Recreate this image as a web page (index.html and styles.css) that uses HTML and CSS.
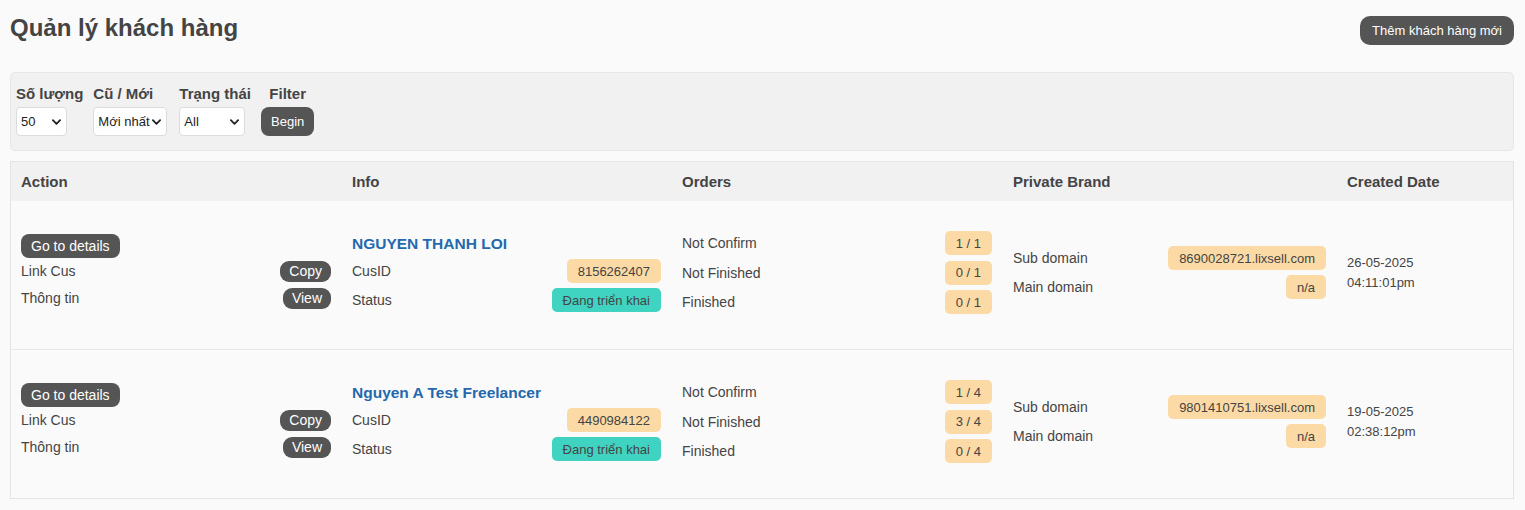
FILE: index.html
```html
<!DOCTYPE html>
<html lang="vi">
<head>
<meta charset="utf-8">
<title>Quản lý khách hàng</title>
<link rel="stylesheet" href="styles.css">
</head>
<body>
<div class="page">
  <header class="topbar">
    <h1 class="title">Quản lý khách hàng</h1>
    <button class="btn btn-add">Thêm khách hàng mới</button>
  </header>

  <section class="filters">
    <div class="fcol">
      <label class="flabel">Số lượng</label>
      <div class="sel sel-qty">
        <select><option>50</option></select>
        <svg class="chev" viewBox="0 0 10 6" width="9" height="6"><path d="M1 1l4 4 4-4" fill="none" stroke="#222" stroke-width="2" stroke-linecap="round" stroke-linejoin="round"/></svg>
      </div>
    </div>
    <div class="fcol">
      <label class="flabel">Cũ / Mới</label>
      <div class="sel sel-order">
        <select><option>Mới nhất</option></select>
        <svg class="chev" viewBox="0 0 10 6" width="9" height="6"><path d="M1 1l4 4 4-4" fill="none" stroke="#222" stroke-width="2" stroke-linecap="round" stroke-linejoin="round"/></svg>
      </div>
    </div>
    <div class="fcol fcol-status">
      <label class="flabel">Trạng thái</label>
      <div class="sel sel-status">
        <select><option>All</option></select>
        <svg class="chev" viewBox="0 0 10 6" width="9" height="6"><path d="M1 1l4 4 4-4" fill="none" stroke="#222" stroke-width="2" stroke-linecap="round" stroke-linejoin="round"/></svg>
      </div>
    </div>
    <div class="fcol fcol-center">
      <label class="flabel">Filter</label>
      <button class="btn btn-begin">Begin</button>
    </div>
  </section>

  <section class="tbl">
    <div class="trow thead">
      <div class="th">Action</div>
      <div class="th">Info</div>
      <div class="th">Orders</div>
      <div class="th">Private Brand</div>
      <div class="th">Created Date</div>
    </div>

    <div class="trow tbody">
      <div class="td">
        <button class="btn btn-go">Go to details</button>
        <div class="kv kv-act"><span>Link Cus</span><button class="btn btn-sm">Copy</button></div>
        <div class="kv kv-act"><span>Thông tin</span><button class="btn btn-sm">View</button></div>
      </div>
      <div class="td">
        <div class="name">NGUYEN THANH LOI</div>
        <div class="kv kv-info"><span>CusID</span><span class="badge">8156262407</span></div>
        <div class="kv kv-info"><span>Status</span><span class="badge badge-teal">Đang triển khai</span></div>
      </div>
      <div class="td">
        <div class="kv kv-ord"><span>Not Confirm</span><span class="badge">1 / 1</span></div>
        <div class="kv kv-ord"><span>Not Finished</span><span class="badge">0 / 1</span></div>
        <div class="kv kv-ord"><span>Finished</span><span class="badge">0 / 1</span></div>
      </div>
      <div class="td">
        <div class="kv kv-info"><span>Sub domain</span><span class="badge">8690028721.lixsell.com</span></div>
        <div class="kv kv-info"><span>Main domain</span><span class="badge">n/a</span></div>
      </div>
      <div class="td date">
        <div>26-05-2025</div>
        <div>04:11:01pm</div>
      </div>
    </div>

    <div class="trow tbody">
      <div class="td">
        <button class="btn btn-go">Go to details</button>
        <div class="kv kv-act"><span>Link Cus</span><button class="btn btn-sm">Copy</button></div>
        <div class="kv kv-act"><span>Thông tin</span><button class="btn btn-sm">View</button></div>
      </div>
      <div class="td">
        <div class="name">Nguyen A Test Freelancer</div>
        <div class="kv kv-info"><span>CusID</span><span class="badge">4490984122</span></div>
        <div class="kv kv-info"><span>Status</span><span class="badge badge-teal">Đang triển khai</span></div>
      </div>
      <div class="td">
        <div class="kv kv-ord"><span>Not Confirm</span><span class="badge">1 / 4</span></div>
        <div class="kv kv-ord"><span>Not Finished</span><span class="badge">3 / 4</span></div>
        <div class="kv kv-ord"><span>Finished</span><span class="badge">0 / 4</span></div>
      </div>
      <div class="td">
        <div class="kv kv-info"><span>Sub domain</span><span class="badge">9801410751.lixsell.com</span></div>
        <div class="kv kv-info"><span>Main domain</span><span class="badge">n/a</span></div>
      </div>
      <div class="td date">
        <div>19-05-2025</div>
        <div>02:38:12pm</div>
      </div>
    </div>
  </section>
</div>
</body>
</html>
```

FILE: styles.css
```css
* { box-sizing: border-box; }

html, body {
  margin: 0;
  padding: 0;
  background: #fafafa;
}

body {
  font-family: "Liberation Sans", Arial, Helvetica, sans-serif;
  font-size: 14px;
  color: #444;
}

.page {
  padding: 14px 11px 0 10px;
}

.topbar {
  display: flex;
  justify-content: space-between;
  align-items: flex-start;
}

.title {
  margin: 0;
  font-size: 24px;
  line-height: 28px;
  font-weight: bold;
  color: #444;
}

.btn {
  font-family: inherit;
  border: none;
  background: #555;
  color: #fff;
  cursor: pointer;
  display: inline-flex;
  align-items: center;
  justify-content: center;
  white-space: nowrap;
}

.btn-add {
  margin-top: 2px;
  height: 29px;
  padding: 0 12px;
  font-size: 13px;
  border-radius: 10px;
}

/* Filters */
.filters {
  margin-top: 27px;
  background: #f1f1f1;
  border: 1px solid #e6e6e6;
  border-radius: 5px;
  padding: 12px 5px 14px;
  display: flex;
  gap: 10px;
  align-items: flex-start;
}

.fcol {
  display: flex;
  flex-direction: column;
  align-items: flex-start;
}

.fcol-status { margin-left: 2px; }

.fcol-center { align-items: center; }

.flabel {
  display: block;
  font-size: 15px;
  line-height: 18px;
  font-weight: bold;
  color: #444;
  margin-bottom: 4px;
  white-space: nowrap;
}

.sel {
  position: relative;
  height: 29px;
}

.sel select {
  appearance: none;
  -webkit-appearance: none;
  height: 29px;
  width: 100%;
  border: 1px solid #dcdcdc;
  border-radius: 4px;
  background: #fff;
  font-family: inherit;
  font-size: 13px;
  color: #222;
  padding: 0 16px 0 4px;
}

.sel-qty { width: 51px; }
.sel-order { width: 74px; }
.sel-status { width: 66px; }

.chev {
  position: absolute;
  right: 6px;
  top: 12px;
  pointer-events: none;
}

.btn-begin {
  height: 29px;
  padding: 0 10px;
  font-size: 13px;
  border-radius: 8px;
}

/* Table */
.tbl {
  margin-top: 10px;
  border: 1px solid #e4e4e4;
}

.trow {
  display: grid;
  grid-template-columns: 331px 330px 331px 334px 1fr;
}

.thead {
  background: #f1f1f1;
}

.th {
  padding: 10px 11px 9px 10px;
  line-height: 20px;
  font-size: 15px;
  font-weight: bold;
  color: #444;
}

.tbody {
  min-height: 148px;
  align-items: center;
  padding-bottom: 5px;
}

.tbody + .tbody {
  min-height: 149px;
  border-top: 1px solid #e8e8e8;
}

.td {
  padding: 0 11px 0 10px;
  display: flex;
  flex-direction: column;
}

.kv {
  display: flex;
  justify-content: space-between;
  align-items: center;
  white-space: nowrap;
}

.kv-act { height: 27px; }
.kv-info { height: 29px; }
.kv-ord { height: 29.5px; }

.btn-go {
  align-self: flex-start;
  height: 24px;
  padding: 0 10px;
  font-size: 14px;
  border-radius: 8px;
}

.btn-sm {
  height: 21px;
  padding: 0 9px;
  font-size: 14px;
  border-radius: 9px;
}

.name {
  height: 26px;
  line-height: 26px;
  font-size: 15.5px;
  font-weight: bold;
  color: #2468ae;
  white-space: nowrap;
}

.badge {
  display: inline-flex;
  align-items: center;
  height: 24px;
  padding: 0 11px;
  background: #fcdaa5;
  color: #444;
  font-size: 13px;
  border-radius: 5px;
}

.badge-teal {
  background: #40d3c1;
}

.date {
  font-size: 13px;
  line-height: 19.5px;
  color: #444;
}
```
